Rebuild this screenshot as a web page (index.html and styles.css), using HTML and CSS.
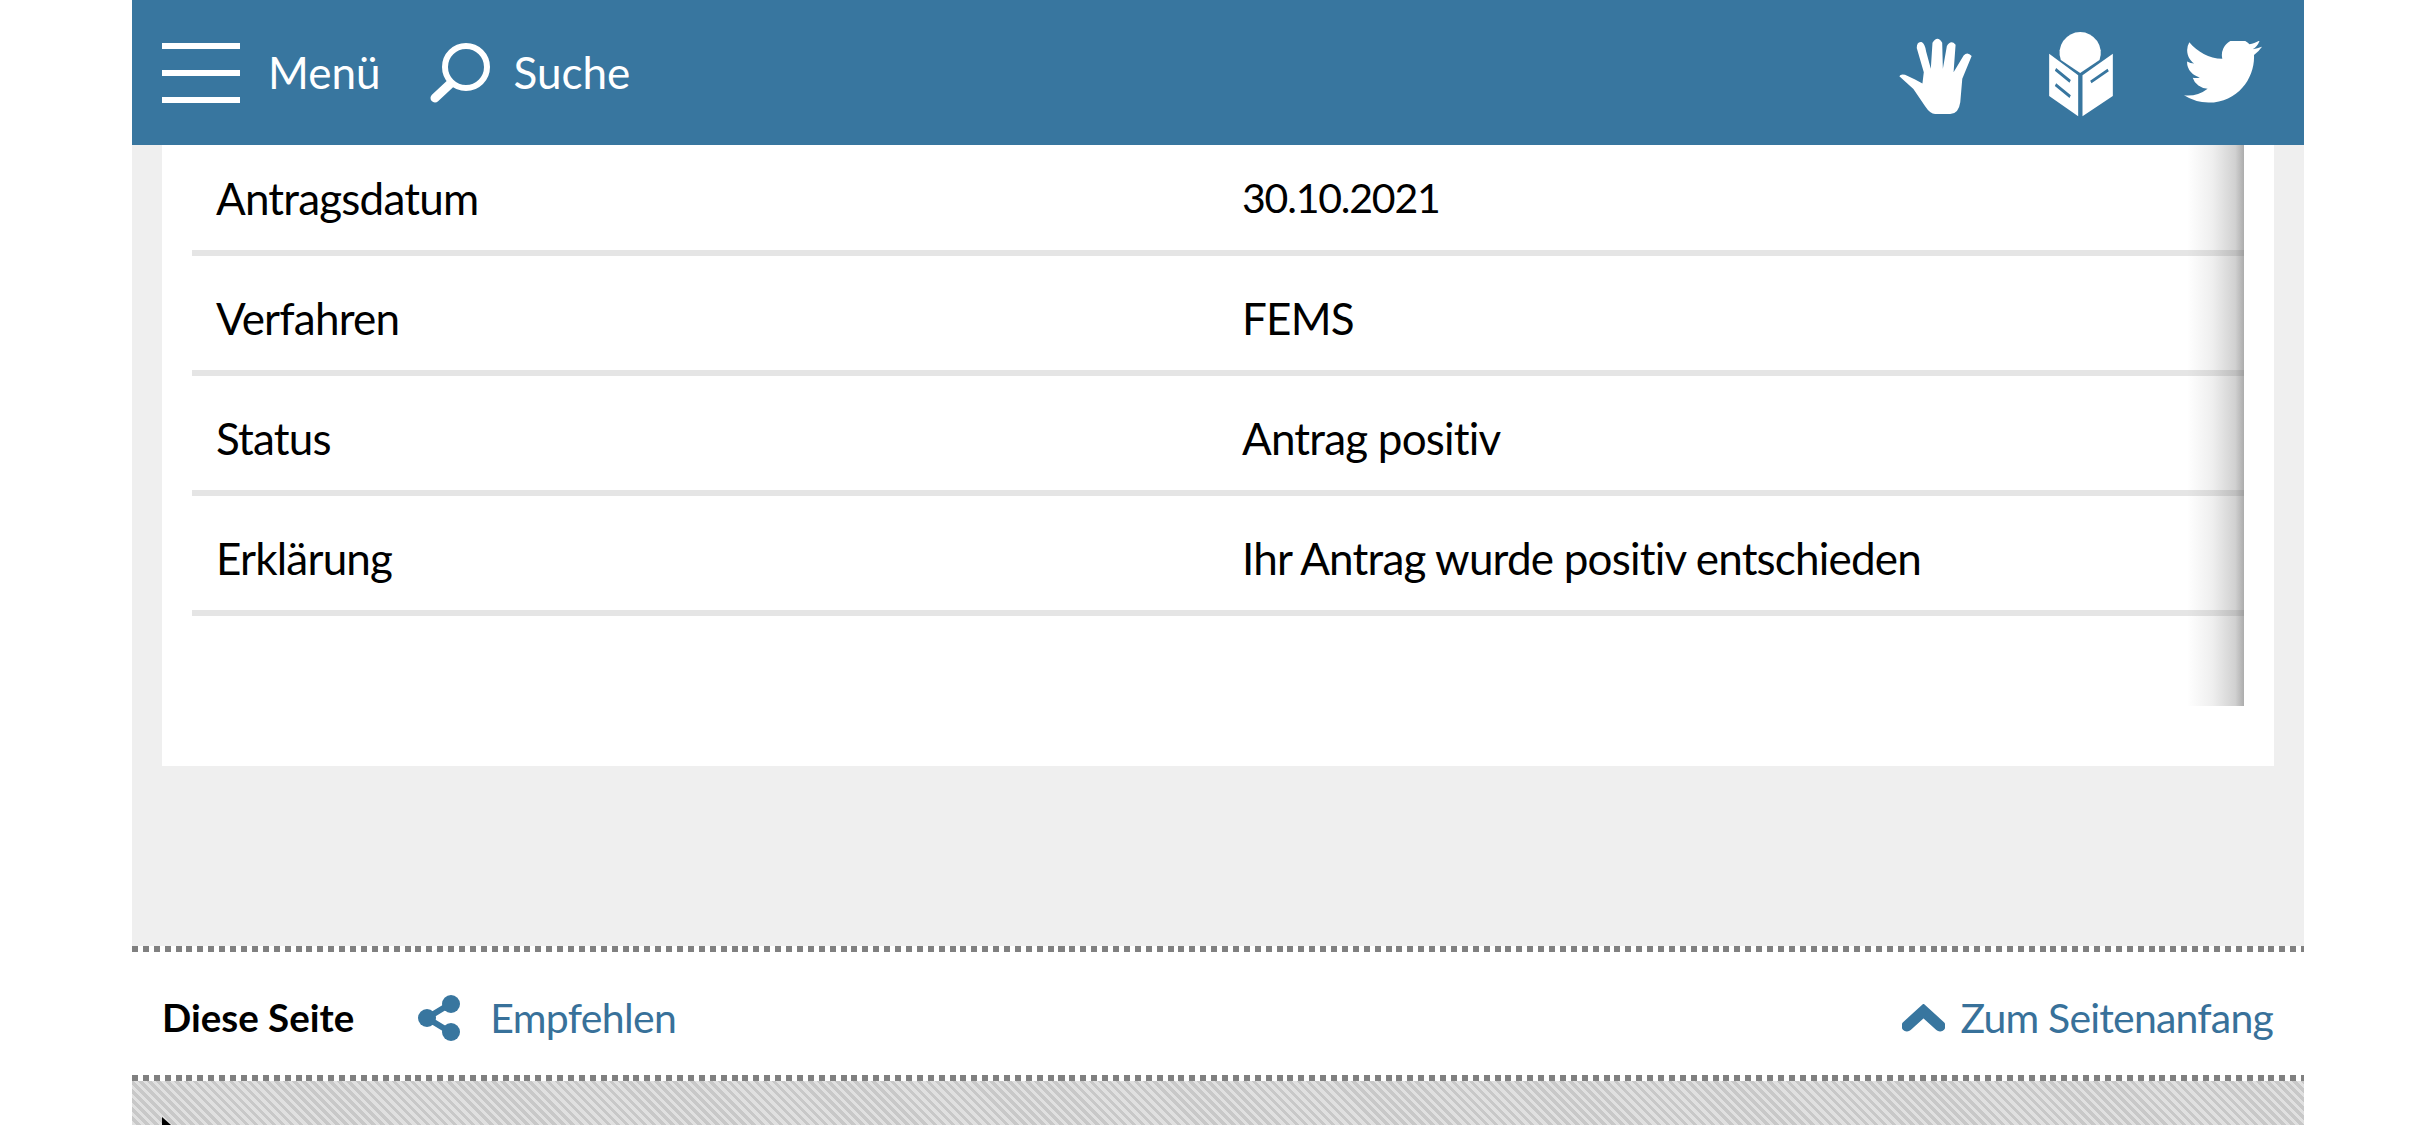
FILE: index.html
```html
<!DOCTYPE html>
<html lang="de">
<head>
<meta charset="utf-8">
<title>Antrag</title>
<link rel="stylesheet" href="styles.css">
</head>
<body>
<div class="page">
  <header class="topbar">
    <a class="tool tool-menu">
      <svg class="ico-burger" viewBox="0 0 78 60"><path d="M0 3H78M0 30H78M0 57H78"/></svg>
      <span>Menü</span>
    </a>
    <a class="tool tool-search">
      <svg class="ico-search" viewBox="0 0 60 60"><circle cx="36" cy="24" r="21"/><path d="M20 41L5 55"/></svg>
      <span>Suche</span>
    </a>
    <div class="socials">
      <svg class="ico-hand" viewBox="57 55 218 230"><path d="M58 172Q62 164 75 168L105 182L127 194L131 160L110 88Q110 68 124 70Q134 74 138 98L152 150L157 72Q172 48 186 72L188 150L200 82Q212 62 226 78L220 160L250 110Q262 98 274 112L246 180L240 250Q235 285 210 285L165 285Q150 285 135 262L100 210Z"/></svg>
      <svg class="ico-book" viewBox="57 30 191 255"><path d="M92 114A62 62 0 1 1 208 114L150 153Z"/><path fill-rule="evenodd" d="M57 95L144 160V283L57 222ZM78 138L74 146L118 182L122 174ZM78 184L74 192L118 228L122 220Z"/><path fill-rule="evenodd" d="M157 160L248 95V222L157 283ZM232 140L180 176L184 184L236 148Z"/></svg>
      <svg class="ico-bird" viewBox="0 2.8 24 19.4" preserveAspectRatio="none"><path d="M23.953 4.57a10 10 0 01-2.825.775 4.958 4.958 0 002.163-2.723c-.951.555-2.005.959-3.127 1.184a4.92 4.92 0 00-8.384 4.482C7.69 8.095 4.067 6.13 1.64 3.162a4.822 4.822 0 00-.666 2.475c0 1.71.87 3.213 2.188 4.096a4.904 4.904 0 01-2.228-.616v.06a4.923 4.923 0 003.946 4.827 4.996 4.996 0 01-2.212.085 4.936 4.936 0 004.604 3.417 9.867 9.867 0 01-6.102 2.105c-.39 0-.779-.023-1.17-.067a13.995 13.995 0 007.557 2.209c9.053 0 13.998-7.496 13.998-13.985 0-.21 0-.42-.015-.63A9.935 9.935 0 0024 4.59z"/></svg>
    </div>
  </header>
  <main class="content">
    <section class="card">
      <div class="scroller">
        <div class="row"><span>Antragsdatum</span><span class="date">30.10.2021</span></div>
        <div class="row"><span>Verfahren</span><span>FEMS</span></div>
        <div class="row"><span>Status</span><span>Antrag positiv</span></div>
        <div class="row"><span>Erklärung</span><span>Ihr Antrag wurde positiv entschieden</span></div>
        <div class="scroll-shadow"></div>
      </div>
    </section>
  </main>
  <div class="dots"></div>
  <footer class="pagebar">
    <strong class="pagebar-title">Diese Seite</strong>
    <a class="pagelink share">
      <svg class="ico-share" viewBox="0 0 42 46"><path d="M32 9L9 23L32 37"/><circle cx="33" cy="9" r="9"/><circle cx="9" cy="23" r="9"/><circle cx="33" cy="37" r="9"/></svg>
      <span>Empfehlen</span>
    </a>
    <a class="pagelink totop">
      <svg class="ico-chevron" viewBox="0 0 43 28"><path d="M5 22L21.500 7L38 22"/></svg>
      <span>Zum Seitenanfang</span>
    </a>
  </footer>
  <div class="dots"></div>
  <div class="hatch">
    <svg class="cursor" viewBox="0 0 12 8"><path d="M0 0L9 8H0Z"/></svg>
  </div>
</div>
</body>
</html>
```

FILE: styles.css
```css
* { box-sizing: border-box; }
html, body { margin: 0; height: 1125px; overflow: hidden; background: #fff; }
body { font-family: "Lato", "Noto Sans", sans-serif; font-size: 44px; color: #000; }
.page { width: 2172px; margin-left: 132px; height: 1125px; display: flex; flex-direction: column; }

.topbar { height: 145px; background: #38769f; color: #fff; display: flex; align-items: center; padding-left: 30px; padding-right: 42px; flex: none; }
.tool { display: flex; align-items: center; }
.tool span { line-height: 1; margin-bottom: 2px; }
.tool-menu { gap: 28px; }
.tool-search { gap: 24px; margin-left: 49px; }
.ico-burger { width: 78px; height: 60px; fill: none; stroke: #fff; stroke-width: 6; }
.ico-search { width: 60px; height: 60px; fill: none; stroke: #fff; stroke-width: 6; stroke-linecap: round; }
.ico-search path { stroke-width: 9; }
.socials { margin-left: auto; display: flex; align-items: center; gap: 77px; fill: #fff; }
.socials svg { display: block; }
.ico-hand { width: 73px; height: 77px; margin-top: 5px; }
.ico-book { width: 64px; height: 85px; margin-top: 3px; }
.ico-bird { width: 78px; height: 63px; margin-top: 0; margin-left: -6px; }

.content { background: #efefef; height: 801px; padding: 0 30px; flex: none; overflow: hidden; }
.card { background: #fff; height: 621px; padding: 0 30px; }
.scroller { position: relative; height: 561px; overflow: hidden; }
.row { display: grid; grid-template-columns: 1026px 1fr; align-items: center; height: 120px; padding: 9px 0 0 24px; border-bottom: 6px solid #e5e5e5; letter-spacing: -.8px; }
.row:first-child { height: 111px; padding-top: 0; }
.date { font-size: 41px; letter-spacing: -1.2px; }
.scroll-shadow { position: absolute; right: 0; top: 0; bottom: 0; width: 57px; background: linear-gradient(to right, rgba(120,120,120,0), rgba(120,120,120,.12) 45%, rgba(100,100,100,.3) 85%, rgba(90,90,90,.5)); }

.dots { height: 6px; flex: none; background: repeating-linear-gradient(to right, #808080 0, #808080 6px, #fff 6px, #fff 10.900px); }
.pagebar { height: 123px; flex: none; display: flex; align-items: center; padding: 7px 31px 0 30px; background: #fff; color: #38719a; }
.pagebar-title { color: #000; font-weight: 700; font-size: 38.500px; }
.pagelink { display: flex; align-items: center; font-size: 41px; letter-spacing: -.65px; }
.share { gap: 30px; margin-left: 64px; }
.totop { gap: 16px; margin-left: auto; letter-spacing: -.8px; }
.ico-share { width: 42px; height: 46px; margin-top: 2px; fill: #38769f; stroke: #38769f; stroke-width: 6; }
.ico-share circle { stroke: none; }
.ico-share path { fill: none; }
.ico-chevron { width: 43px; height: 28px; margin-top: 2px; fill: none; stroke: #38769f; stroke-width: 11; stroke-linecap: round; }

.hatch { position: relative; flex: 1; overflow: hidden; background: repeating-linear-gradient(45deg, #e0e0e0 0, #e0e0e0 3.200px, #c8c8c8 3.200px, #c8c8c8 6.400px); }
.cursor { position: absolute; left: 30px; top: 36px; width: 12px; height: 8px; fill: #000; }
```
